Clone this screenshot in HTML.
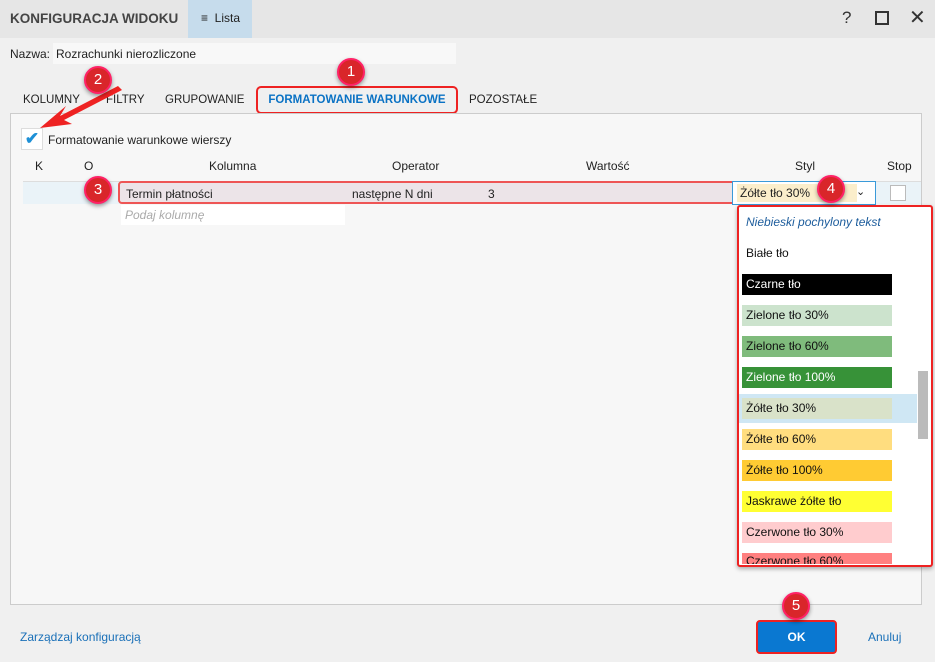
<!DOCTYPE html>
<html><head><meta charset="utf-8"><style>
*{box-sizing:border-box;margin:0;padding:0}
body{width:935px;height:662px;background:#f0f0f0;font-family:"Liberation Sans",sans-serif;font-size:12px;color:#222;position:relative;overflow:hidden}
.a{position:absolute}
.badge{position:absolute;width:28px;height:28px;border-radius:50%;background:#d9262a;border:2px solid #f26;color:#fff;font-size:15px;text-align:center;line-height:24px;box-shadow:0 2px 4px rgba(0,0,0,.4)}
.it{position:absolute;left:742px;width:150px;height:21px;line-height:21px;padding-left:4px;font-size:12px;color:#111}
.tab{font-size:11.5px}
</style></head><body>
<div class="a" style="left:0;top:0;width:935px;height:38px;background:#e6e6e6"></div>
<div class="a" style="left:10px;top:11px;font-weight:bold;font-size:13.5px;color:#444">KONFIGURACJA WIDOKU</div>
<div class="a" style="left:188px;top:0;width:64px;height:38px;background:#c6dcec;padding:11px 0 0 13px;font-size:12px">≡ &nbsp;Lista</div>
<div class="a" style="left:842px;top:8px;font-size:17px;color:#333">?</div>
<div class="a" style="left:875px;top:11px;width:14px;height:14px;border:2px solid #333"></div>
<div class="a" style="left:909px;top:5px;font-size:20px;color:#333">✕</div>
<div class="a" style="left:10px;top:47px">Nazwa:</div>
<div class="a" style="left:53px;top:43px;width:403px;height:21px;background:#f8f8f8;padding:4px 3px">Rozrachunki nierozliczone</div>
<div class="a tab" style="left:23px;top:94px">KOLUMNY</div>
<div class="a tab" style="left:106px;top:94px">FILTRY</div>
<div class="a tab" style="left:165px;top:94px">GRUPOWANIE</div>
<div class="a" style="left:256px;top:86px;width:202px;height:28px;border:2px solid #e22;border-radius:5px;color:#0a72c4;font-weight:bold;text-align:center;line-height:24px;font-size:11.5px">FORMATOWANIE WARUNKOWE</div>
<div class="a tab" style="left:469px;top:94px">POZOSTAŁE</div>
<div class="a" style="left:10px;top:113px;width:912px;height:492px;background:#f7f7f7;border:1px solid #ccc"></div>
<div class="a" style="left:21px;top:128px;width:22px;height:22px;background:#fff;border:1px solid #ddd;color:#1e90d6;font-size:17px;text-align:center;line-height:20px;font-weight:bold">✔</div>
<div class="a" style="left:48px;top:133px">Formatowanie warunkowe wierszy</div>
<div class="a" style="left:35px;top:159px">K</div>
<div class="a" style="left:84px;top:159px">O</div>
<div class="a" style="left:209px;top:159px">Kolumna</div>
<div class="a" style="left:392px;top:159px">Operator</div>
<div class="a" style="left:586px;top:159px">Wartość</div>
<div class="a" style="left:795px;top:159px">Styl</div>
<div class="a" style="left:887px;top:159px">Stop</div>
<div class="a" style="left:23px;top:181px;width:898px;height:23px;background:#eaf3f8;border-top:1px solid #ddd"></div>
<div class="a" style="left:118px;top:181px;width:620px;height:23px;background:#ece4e8;border:2px solid #e55;border-radius:4px"></div>
<div class="a" style="left:126px;top:187px">Termin płatności</div>
<div class="a" style="left:352px;top:187px">następne N dni</div>
<div class="a" style="left:488px;top:187px">3</div>
<div class="a" style="left:732px;top:181px;width:144px;height:24px;border:1px solid #3a9ad9;background:#fff"></div>
<div class="a" style="left:737px;top:184px;width:120px;height:18px;background:#fbeecb;padding:2px 3px">Żółte tło 30%</div>
<div class="a" style="left:856px;top:185px;font-size:11px">⌄</div>
<div class="a" style="left:890px;top:185px;width:16px;height:16px;border:1px solid #bbb;background:#fff"></div>
<div class="a" style="left:121px;top:205px;width:224px;height:20px;background:#fff;color:#aaa;font-style:italic;padding:3px 4px">Podaj kolumnę</div>
<div class="a" style="left:737px;top:205px;width:196px;height:362px;background:#fff;border:2px solid #e22;border-radius:3px;overflow:hidden;box-shadow:0 2px 4px rgba(0,0,0,.3)">
<div class="a" style="left:179px;top:164px;width:10px;height:68px;background:#bbb"></div>
</div>
<div class="it" style="top:212px;color:#1c5c9c;font-style:italic">Niebieski pochylony tekst</div>
<div class="it" style="top:243px">Białe tło</div>
<div class="it" style="top:274px;background:#000;color:#fff">Czarne tło</div>
<div class="it" style="top:305px;background:#cce3cd">Zielone tło 30%</div>
<div class="it" style="top:336px;background:#7fbb7c">Zielone tło 60%</div>
<div class="it" style="top:367px;background:#379238;color:#fff">Zielone tło 100%</div>
<div class="a" style="left:739px;top:394px;width:178px;height:29px;background:#cfe7f4"></div>
<div class="it" style="top:398px;background:#d9e2c9">Żółte tło 30%</div>
<div class="it" style="top:429px;background:#ffdd7f">Żółte tło 60%</div>
<div class="it" style="top:460px;background:#ffcb33">Żółte tło 100%</div>
<div class="it" style="top:491px;background:#ffff33">Jaskrawe żółte tło</div>
<div class="it" style="top:522px;background:#ffccce">Czerwone tło 30%</div>
<div class="it" style="top:553px;height:11px;background:#ff8080;overflow:hidden;line-height:17px">Czerwone tło 60%</div>
<div class="a" style="left:20px;top:630px;color:#1a70b8">Zarządzaj konfiguracją</div>
<div class="a" style="left:756px;top:620px;width:81px;height:34px;background:#0a78d1;border:2px solid #e22;border-radius:4px;color:#fff;font-weight:bold;text-align:center;line-height:30px">OK</div>
<div class="a" style="left:868px;top:630px;color:#1a70b8">Anuluj</div>
<svg class="a" style="left:30px;top:68px" width="100" height="70"><path d="M88 18 L30 48 L36 38 L10 60 L42 56 L34 52 L92 22Z" fill="#e22"/></svg>
<div class="badge" style="left:337px;top:58px">1</div>
<div class="badge" style="left:84px;top:66px">2</div>
<div class="badge" style="left:84px;top:176px">3</div>
<div class="badge" style="left:817px;top:175px">4</div>
<div class="badge" style="left:782px;top:592px">5</div>
</body></html>
